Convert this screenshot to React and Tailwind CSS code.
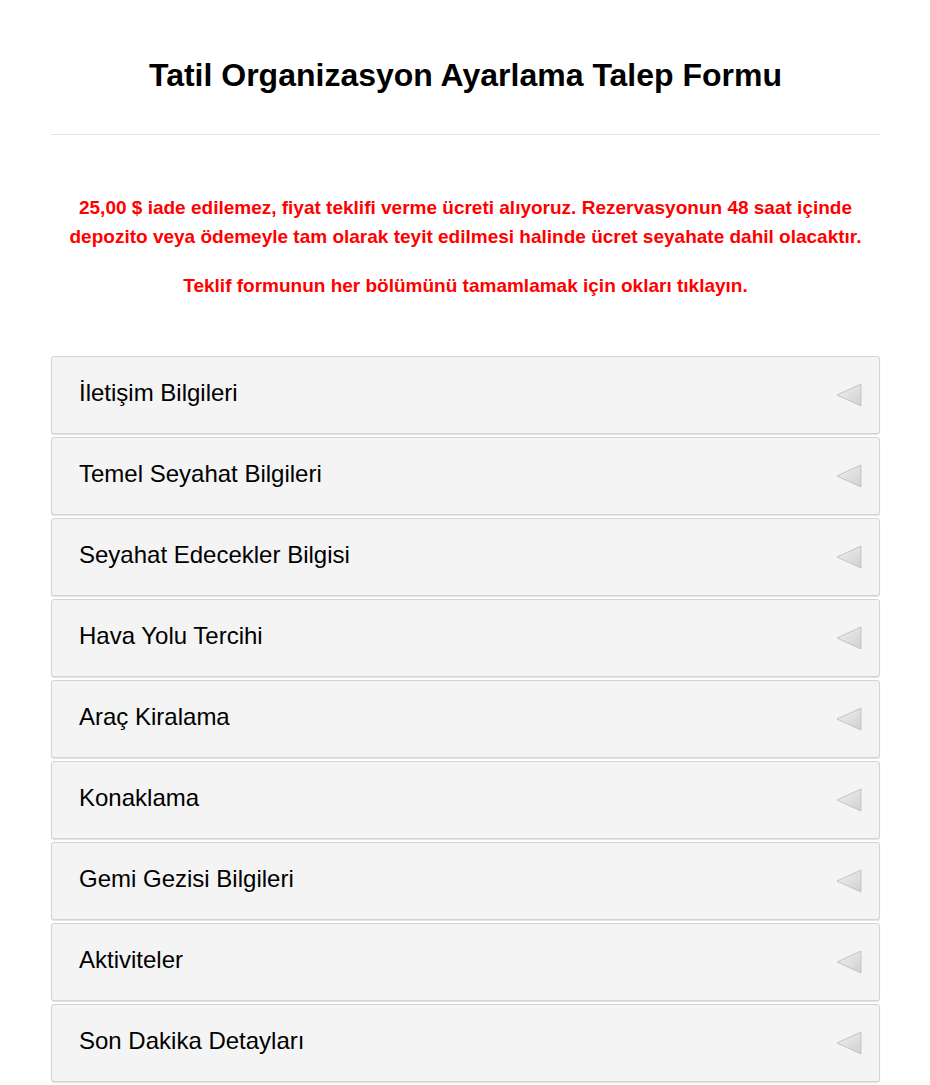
const sections = [
  'İletişim Bilgileri',
  'Temel Seyahat Bilgileri',
  'Seyahat Edecekler Bilgisi',
  'Hava Yolu Tercihi',
  'Araç Kiralama',
  'Konaklama',
  'Gemi Gezisi Bilgileri',
  'Aktiviteler',
  'Son Dakika Detayları',
]

function Arrow() {
  return (
    <svg width="28" height="26" viewBox="0 0 28 26" className="shrink-0">
      <defs>
        <linearGradient id="arrowFill" x1="0" y1="0" x2="1" y2="1">
          <stop offset="0" stopColor="#f2f2f2" />
          <stop offset="1" stopColor="#cfcfcf" />
        </linearGradient>
      </defs>
      <polygon points="26,2 26,24 2,13" fill="url(#arrowFill)" stroke="#c4c4c4" strokeWidth="1" strokeLinejoin="round" />
    </svg>
  )
}

export default function App() {
  return (
    <div className="min-h-[1085px] bg-white pl-[51px] pr-[50px] pt-[55px] font-['Liberation_Sans',Arial,sans-serif]">
      <h1 className="text-center text-[32px] font-bold leading-[40px] text-black">
        Tatil Organizasyon Ayarlama Talep Formu
      </h1>
      <hr className="mt-[39px] border-t border-[#e6e6e6]" />

      {/* notice */}
      <div className="mt-[58px] text-center text-[19px] font-bold leading-[29px] text-[#ff0000]">
        <p className="px-2">
          25,00 $ iade edilemez, fiyat teklifi verme ücreti alıyoruz. Rezervasyonun 48 saat içinde depozito veya ödemeyle tam olarak teyit edilmesi halinde ücret seyahate dahil olacaktır.
        </p>
        <p className="mt-[20px]">Teklif formunun her bölümünü tamamlamak için okları tıklayın.</p>
      </div>

      {/* sections */}
      <div className="mt-[56px] flex flex-col gap-[3px]">
        {sections.map(s => (
          <div
            key={s}
            className="flex h-[78px] items-center justify-between rounded-[3px] border border-[#d3d3d3] bg-[#f4f4f4] pl-[27px] pr-[16px] shadow-[0_1px_1px_rgba(0,0,0,0.12)]"
          >
            <span className="-mt-[5px] text-[24px] leading-none text-black">{s}</span>
            <Arrow />
          </div>
        ))}
      </div>
    </div>
  )
}
